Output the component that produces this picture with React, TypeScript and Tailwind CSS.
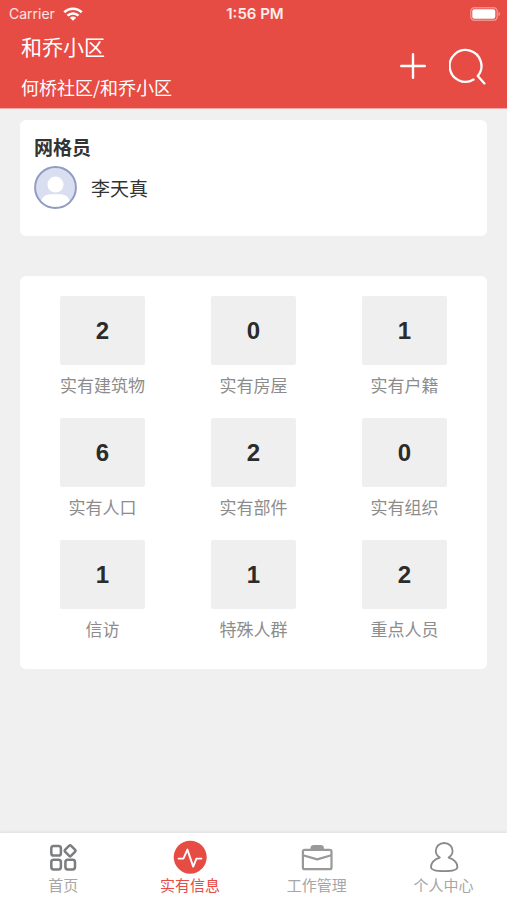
import React, { useState } from 'react';

type Stat = {
    label: string;
    count: number;
};

type Tab = {
    id: string;
    label: string;
    color: string;
    icon: React.ReactNode;
};

const stats: Stat[] = [
    { label: '实有建筑物', count: 2 },
    { label: '实有房屋', count: 0 },
    { label: '实有户籍', count: 1 },
    { label: '实有人口', count: 6 },
    { label: '实有部件', count: 2 },
    { label: '实有组织', count: 0 },
    { label: '信访', count: 1 },
    { label: '特殊人群', count: 1 },
    { label: '重点人员', count: 2 },
];

const WifiIcon = () => (
    <svg width="20" height="14" viewBox="0 0 20 14" fill="none" stroke="currentColor" strokeWidth="2.6">
        <path d="M1.3 5.3C6.1.6 13.9.6 18.7 5.3" />
        <path d="M4.5 8.6c3.1-2.9 7.9-2.9 11 0" />
        <path d="M10 13.8 6.8 10.8c1.8-1.6 4.6-1.6 6.4 0z" fill="currentColor" stroke="none" />
    </svg>
);

const BatteryIcon = () => (
    <svg width="31" height="14" viewBox="0 0 31 14">
        <rect x="0.8" y="0.8" width="26.4" height="12.4" rx="3.6" fill="none" stroke="#fff" strokeOpacity="0.4" strokeWidth="1.4" />
        <rect x="2.3" y="2.3" width="23" height="9.4" rx="2" fill="#fff" />
        <path d="M28.6 4.8c1.6.5 1.6 3.9 0 4.4z" fill="#fff" fillOpacity="0.5" />
    </svg>
);

const PlusIcon = () => (
    <svg width="26" height="26" viewBox="0 0 26 26" fill="none" stroke="currentColor" strokeWidth="2.4" strokeLinecap="round">
        <path d="M13 1.2v23.6M1.2 13h23.6" />
    </svg>
);

const SearchIcon = () => (
    <svg width="37" height="37" viewBox="0 0 37 37" fill="none" stroke="currentColor" strokeWidth="2.3" strokeLinecap="round" strokeLinejoin="round">
        <path d="M24.6 31.6A15.9 15.9 0 1 1 28.8 28L35.4 35.4" />
    </svg>
);

const AvatarIcon = () => (
    <svg width="43" height="43" viewBox="0 0 44 44">
        <defs>
            <clipPath id="avatar">
                <circle cx="22" cy="22" r="19.8" />
            </clipPath>
        </defs>
        <circle cx="22" cy="22" r="20.9" fill="#d9dff0" stroke="#919cc4" strokeWidth="2" />
        <g clipPath="url(#avatar)" fill="#fff">
            <circle cx="22" cy="19" r="8.2" />
            <path d="M6 44C6 33 11 29 17 29h10c6 0 11 4 11 15z" />
        </g>
    </svg>
);

const HomeIcon = () => (
    <svg width="34" height="34" viewBox="0 0 34 34" fill="none" stroke="#7b7e80" strokeWidth="2.5">
        <rect x="5.3" y="6" width="9.6" height="9.6" rx="2.4" />
        <rect x="5.3" y="19.8" width="9.6" height="9.6" rx="2.4" />
        <rect x="19.4" y="19.8" width="9.6" height="9.6" rx="2.4" />
        <rect x="19.9" y="6.6" width="8.4" height="8.4" rx="1.2" transform="rotate(45 24.1 10.8)" />
    </svg>
);

const PulseIcon = () => (
    <svg width="34" height="34" viewBox="0 0 34 34" fill="none">
        <circle cx="17.2" cy="17.2" r="16.5" fill="#e64c43" />
        <path d="M5.6 18.6h4.8L14.4 9.6l5.8 17L23.4 18.6h5" stroke="#fff" strokeWidth="1.9" strokeLinecap="round" strokeLinejoin="round" />
    </svg>
);

const BriefcaseIcon = () => (
    <svg width="34" height="34" viewBox="0 0 34 34" fill="none" stroke="#999" strokeWidth="2.2" strokeLinejoin="round">
        <rect x="2.9" y="9.8" width="28.6" height="19.4" rx="1.8" />
        <path d="M11.6 9.6V8.2c0-1.4.8-2 2.2-2h6.8c1.4 0 2.2.6 2.2 2v1.4M12 8.4h10.4" />
        <path d="M3 15.2l14.2 4.2 14.2-4.2" />
    </svg>
);

const PersonIcon = () => (
    <svg width="34" height="34" viewBox="0 0 34 34" fill="none" stroke="#8a8a8a" strokeWidth="1.8" strokeLinejoin="round">
        <path d="M12.8 17.6C10 15.8 8.8 13.6 8.8 11 8.8 6.4 12.4 3 17.2 3s8.4 3.4 8.4 8c0 2.6-1.2 4.8-4 6.6 6 2 8.8 5.6 8.8 9.4 0 3-3.6 4.2-13.2 4.2S4 30 4 27c0-3.8 2.8-7.4 8.8-9.4z" />
    </svg>
);

const tabs: Tab[] = [
    { id: 'home', label: '首页', color: 'text-[#a6a6a6]', icon: <HomeIcon /> },
    { id: 'info', label: '实有信息', color: 'text-[#e64c43]', icon: <PulseIcon /> },
    { id: 'work', label: '工作管理', color: 'text-[#a6a6a6]', icon: <BriefcaseIcon /> },
    { id: 'me', label: '个人中心', color: 'text-[#a6a6a6]', icon: <PersonIcon /> },
];

export default function App() {
    const [active, setActive] = useState('info');

    return (
        <div className="min-h-screen flex flex-col bg-[#f0f0f0] font-['Noto_Sans_CJK_SC',sans-serif]">
            <header className="bg-[#e64c43] text-white border-b border-[#f0a9a5]">
                {/* Status bar */}
                <div className="grid grid-cols-3 items-center h-7 pl-[9px] pr-[6px] font-['Inter',sans-serif] text-sm">
                    <div className="flex items-center gap-2 text-white/85">
                        <span>Carrier</span>
                        <span className="text-white"><WifiIcon /></span>
                    </div>
                    <div className="text-center text-[15px] font-semibold text-white/90">1:56 PM</div>
                    <div className="flex justify-end"><BatteryIcon /></div>
                </div>

                <div className="flex items-center justify-between h-20 px-[21px]">
                    <div className="flex flex-col gap-[13px] pb-[3px]">
                        <h1 className="text-[21px] leading-7 font-normal">和乔小区</h1>
                        <p className="text-[18px] leading-7">何桥社区/和乔小区</p>
                    </div>
                    <div className="flex items-center gap-[23px] pb-1">
                        <button type="button" aria-label="添加"><PlusIcon /></button>
                        <button type="button" aria-label="搜索"><SearchIcon /></button>
                    </div>
                </div>
            </header>

            <main className="flex-1 px-5 pt-[11px] pb-5">
                <section className="bg-white rounded-md px-[14px] pt-[11px] pb-[27px] mb-10">
                    <h2 className="text-[19px] leading-8 font-bold text-[#333]">网格员</h2>
                    <div className="flex items-center gap-[14px] pt-[3px]">
                        <AvatarIcon />
                        <span className="text-[19px] leading-8 text-[#333]">李天真</span>
                    </div>
                </section>

                <section className="bg-white rounded-md px-[7px] pt-5 pb-7">
                    <div className="grid grid-cols-3 gap-y-[21px]">
                        {stats.map((stat) => (
                            <button key={stat.label} type="button" className="flex flex-col items-center gap-2">
                                <span className="flex items-center justify-center w-[85px] h-[69px] rounded-xs bg-[#efefef] font-['Liberation_Sans',sans-serif] text-2xl font-bold text-[#2b2b2b]">
                                    {stat.count}
                                </span>
                                <span className="text-[17px] leading-6 text-[#8c8c8c]">{stat.label}</span>
                            </button>
                        ))}
                    </div>
                </section>
            </main>

            <nav className="sticky bottom-0 grid grid-cols-4 bg-white pt-[7px] pb-[5px] shadow-[0_-1px_3px_rgba(0,0,0,0.08)]">
                {tabs.map((tab) => (
                    <a
                        key={tab.id}
                        href={`#${tab.id}`}
                        onClick={() => setActive(tab.id)}
                        aria-current={active === tab.id ? 'page' : undefined}
                        className="flex flex-col items-center"
                    >
                        {tab.icon}
                        <span className={`text-[15px] leading-[21px] ${tab.color}`}>{tab.label}</span>
                    </a>
                ))}
            </nav>
        </div>
    );
}
